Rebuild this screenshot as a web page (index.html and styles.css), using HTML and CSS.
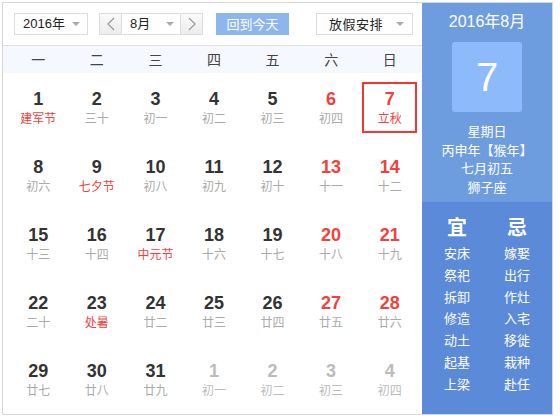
FILE: index.html
```html
<!DOCTYPE html>
<html lang="zh-CN">
<head>
<meta charset="utf-8">
<title>万年历</title>
<link rel="stylesheet" href="styles.css">
</head>
<body>
<div class="cal">
  <div class="main">
    <div class="toolbar">
      <div class="select sel-year"><span>2016年</span><i class="caret"></i></div>
      <div class="month-group">
        <div class="nav-btn"><svg width="8" height="14" viewBox="0 0 8 14"><path d="M7 1 L1 7 L7 13" fill="none" stroke="#999" stroke-width="1.2"/></svg></div>
        <div class="select sel-month"><span>8月</span><i class="caret"></i></div>
        <div class="nav-btn"><svg width="8" height="14" viewBox="0 0 8 14"><path d="M1 1 L7 7 L1 13" fill="none" stroke="#999" stroke-width="1.2"/></svg></div>
      </div>
      <div class="today-btn">回到今天</div>
      <div class="select sel-holiday"><span>放假安排</span><i class="caret"></i></div>
    </div>
    <div class="weekdays">
      <span>一</span><span>二</span><span>三</span><span>四</span><span>五</span><span>六</span><span>日</span>
    </div>
    <div class="grid">
      <div class="cell"><div class="day"><b>1</b><em class="fest">建军节</em></div></div>
      <div class="cell"><div class="day"><b>2</b><em>三十</em></div></div>
      <div class="cell"><div class="day"><b>3</b><em>初一</em></div></div>
      <div class="cell"><div class="day"><b>4</b><em>初二</em></div></div>
      <div class="cell"><div class="day"><b>5</b><em>初三</em></div></div>
      <div class="cell"><div class="day wk"><b>6</b><em>初四</em></div></div>
      <div class="cell"><div class="day wk sel"><b>7</b><em class="fest">立秋</em></div></div>

      <div class="cell"><div class="day"><b>8</b><em>初六</em></div></div>
      <div class="cell"><div class="day"><b>9</b><em class="fest">七夕节</em></div></div>
      <div class="cell"><div class="day"><b>10</b><em>初八</em></div></div>
      <div class="cell"><div class="day"><b>11</b><em>初九</em></div></div>
      <div class="cell"><div class="day"><b>12</b><em>初十</em></div></div>
      <div class="cell"><div class="day wk"><b>13</b><em>十一</em></div></div>
      <div class="cell"><div class="day wk"><b>14</b><em>十二</em></div></div>

      <div class="cell"><div class="day"><b>15</b><em>十三</em></div></div>
      <div class="cell"><div class="day"><b>16</b><em>十四</em></div></div>
      <div class="cell"><div class="day"><b>17</b><em class="fest">中元节</em></div></div>
      <div class="cell"><div class="day"><b>18</b><em>十六</em></div></div>
      <div class="cell"><div class="day"><b>19</b><em>十七</em></div></div>
      <div class="cell"><div class="day wk"><b>20</b><em>十八</em></div></div>
      <div class="cell"><div class="day wk"><b>21</b><em>十九</em></div></div>

      <div class="cell"><div class="day"><b>22</b><em>二十</em></div></div>
      <div class="cell"><div class="day"><b>23</b><em class="fest">处暑</em></div></div>
      <div class="cell"><div class="day"><b>24</b><em>廿二</em></div></div>
      <div class="cell"><div class="day"><b>25</b><em>廿三</em></div></div>
      <div class="cell"><div class="day"><b>26</b><em>廿四</em></div></div>
      <div class="cell"><div class="day wk"><b>27</b><em>廿五</em></div></div>
      <div class="cell"><div class="day wk"><b>28</b><em>廿六</em></div></div>

      <div class="cell"><div class="day"><b>29</b><em>廿七</em></div></div>
      <div class="cell"><div class="day"><b>30</b><em>廿八</em></div></div>
      <div class="cell"><div class="day"><b>31</b><em>廿九</em></div></div>
      <div class="cell"><div class="day other"><b>1</b><em>初一</em></div></div>
      <div class="cell"><div class="day other"><b>2</b><em>初二</em></div></div>
      <div class="cell"><div class="day other"><b>3</b><em>初三</em></div></div>
      <div class="cell"><div class="day other"><b>4</b><em>初四</em></div></div>
    </div>
  </div>
  <div class="side">
    <div class="side-top">
      <div class="side-title">2016年8月</div>
      <div class="big-day">7</div>
      <div class="info">
        <div>星期日</div>
        <div>丙申年【猴年】</div>
        <div>七月初五</div>
        <div>狮子座</div>
      </div>
    </div>
    <div class="side-bottom">
      <div class="yj">
        <div class="col">
          <div class="yj-head">宜</div>
          <div>安床</div><div>祭祀</div><div>拆卸</div><div>修造</div><div>动土</div><div>起基</div><div>上梁</div>
        </div>
        <div class="col">
          <div class="yj-head">忌</div>
          <div>嫁娶</div><div>出行</div><div>作灶</div><div>入宅</div><div>移徙</div><div>栽种</div><div>赴任</div>
        </div>
      </div>
    </div>
  </div>
</div>
</body>
</html>
```
FILE: styles.css
```css
* { box-sizing: border-box; }
html, body { margin: 0; padding: 0; background: #fff; }
body {
  font-family: "Liberation Sans", "Noto Sans CJK SC", sans-serif;
  color: #333;
}
.cal {
  margin: 2px 0 0 2px;
  width: 551px;
  height: 413px;
  border: 1px solid #d8d8d8;
  display: flex;
}
.main {
  width: 419px;
  display: flex;
  flex-direction: column;
}
.toolbar {
  height: 43px;
  border-bottom: 1px solid #e0e0e0;
  display: flex;
  align-items: flex-start;
  padding: 10px 0 0 11px;
}
.select {
  height: 22px;
  border: 1px solid #dcdcdc;
  background: #fff;
  display: flex;
  align-items: center;
  justify-content: space-between;
  font-size: 13px;
  color: #222;
}
.select span { line-height: 20px; }
.caret {
  width: 0; height: 0;
  border-left: 4px solid transparent;
  border-right: 4px solid transparent;
  border-top: 4px solid #aaa;
}
.sel-year { width: 74px; padding: 0 7px 0 8px; }
.month-group { display: flex; margin-left: 11px; }
.nav-btn {
  width: 23px; height: 22px;
  border: 1px solid #dcdcdc;
  background: linear-gradient(#fafafa, #ececec);
  display: flex; align-items: center; justify-content: center;
}
.sel-month { width: 58px; border-left: none; border-right: none; padding: 0 6px 0 8px; }
.today-btn {
  margin-left: 13px;
  width: 73px; height: 22px;
  background: #8db5ee;
  color: #fff;
  font-size: 13px;
  line-height: 22px;
  text-align: center;
  font-family: "Noto Sans CJK SC", sans-serif;
}
.sel-holiday { margin-left: 27px; width: 97px; padding: 0 8px 0 12px; }
.sel-holiday span { font-family: "Noto Sans CJK SC", sans-serif; letter-spacing: 0.5px; }

.weekdays {
  height: 27px;
  background: #f5f8fe;
  display: grid;
  grid-template-columns: repeat(7, 1fr);
  padding: 0 3px 0 6px;
  align-items: center;
  font-family: "Noto Sans CJK SC", sans-serif;
  font-size: 14px;
  color: #444;
}
.weekdays span { text-align: center; line-height: 27px; }

.grid {
  flex: 1;
  display: grid;
  grid-template-columns: repeat(7, 1fr);
  grid-template-rows: repeat(5, 68px);
  padding: 0 3px 0 6px;
}
.cell {
  display: flex;
  align-items: center;
  justify-content: center;
}
.day {
  width: 55px;
  height: 51px;
  border: 2px solid transparent;
  display: flex;
  flex-direction: column;
  align-items: center;
  justify-content: center;
  padding-top: 1px;
}
.day b {
  font-family: "Liberation Sans", sans-serif;
  font-weight: bold;
  font-size: 18px;
  line-height: 20px;
  color: #333;
}
.day em {
  font-style: normal;
  font-family: "Noto Sans CJK SC", sans-serif;
  font-size: 12px;
  line-height: 18px;
  color: #aaa;
}
.day em.fest { color: #f2403c; }
.day.wk b { color: #f2403c; }
.day.other b { color: #bbb; }
.day.other em { color: #bbb; }
.day.sel { border-color: #f53434; }

.side {
  width: 130px;
  display: flex;
  flex-direction: column;
  color: #fff;
  font-family: "Noto Sans CJK SC", sans-serif;
}
.side-top {
  height: 199px;
  background: #6d9ddf;
  display: flex;
  flex-direction: column;
  align-items: center;
  padding-top: 9px;
}
.side-title {
  font-family: "Liberation Sans", "Noto Sans CJK SC", sans-serif;
  font-size: 16px;
  line-height: 20px;
}
.big-day {
  margin-top: 10px;
  width: 70px; height: 70px;
  background: #8cbafa;
  border-radius: 3px;
  font-family: "Liberation Sans", sans-serif;
  font-size: 40px;
  line-height: 70px;
  text-align: center;
}
.info {
  margin-top: 10px;
  font-size: 13px;
  line-height: 18.7px;
  text-align: center;
}
.side-bottom {
  flex: 1;
  background: #5a8ad8;
  padding: 12px 5px 0 5px;
}
.yj { display: grid; grid-template-columns: 60px 60px; }
.col { text-align: center; font-size: 13px; line-height: 21.8px; }
.yj-head {
  font-size: 20px;
  font-weight: bold;
  line-height: 26px;
  margin-bottom: 2px;
}
```
